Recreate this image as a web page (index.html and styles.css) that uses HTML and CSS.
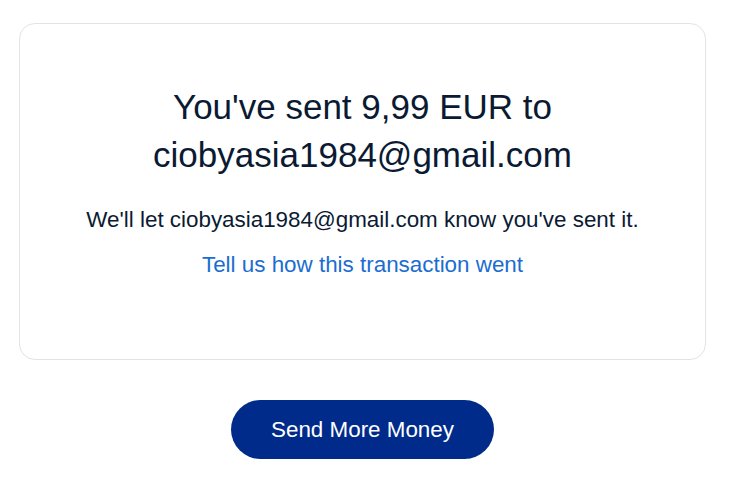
FILE: index.html
```html
<!DOCTYPE html>
<html>
<head>
<meta charset="utf-8">
<link rel="stylesheet" href="styles.css">
</head>
<body>
<div class="page">
  <div class="card">
    <h1 class="title">You've sent 9,99 EUR to<br>ciobyasia1984@gmail.com</h1>
    <p class="note">We'll let ciobyasia1984@gmail.com know you've sent it.</p>
    <a class="feedback" href="#">Tell us how this transaction went</a>
  </div>
  <div class="actions">
    <button class="primary">Send More Money</button>
  </div>
</div>
</body>
</html>
```
FILE: styles.css
```css
html, body {
  margin: 0;
  padding: 0;
  background: #ffffff;
}
body {
  font-family: "Liberation Sans", Arial, sans-serif;
  color: #0b1a33;
}
.page {
  padding: 23px 28px 0 19px;
}
.card {
  box-sizing: border-box;
  width: 687px;
  height: 337px;
  border: 1px solid #e3e3e3;
  border-radius: 16px;
  padding: 59px 10px 0;
  display: flex;
  flex-direction: column;
  align-items: center;
  text-align: center;
}
.title {
  margin: 0;
  font-size: 35px;
  font-weight: normal;
  line-height: 48px;
}
.note {
  margin: 26px 0 0;
  font-size: 22.4px;
  line-height: 30px;
}
.feedback {
  margin-top: 15px;
  font-size: 22.4px;
  line-height: 30px;
  color: #1b6dd0;
  text-decoration: none;
}
.actions {
  display: flex;
  justify-content: center;
  padding-top: 40px;
  padding-left: 1px;
}
.primary {
  width: 263px;
  height: 59px;
  border: none;
  border-radius: 30px;
  background: #002b8a;
  color: #ffffff;
  font-family: "Liberation Sans", Arial, sans-serif;
  font-size: 22.4px;
}
```
